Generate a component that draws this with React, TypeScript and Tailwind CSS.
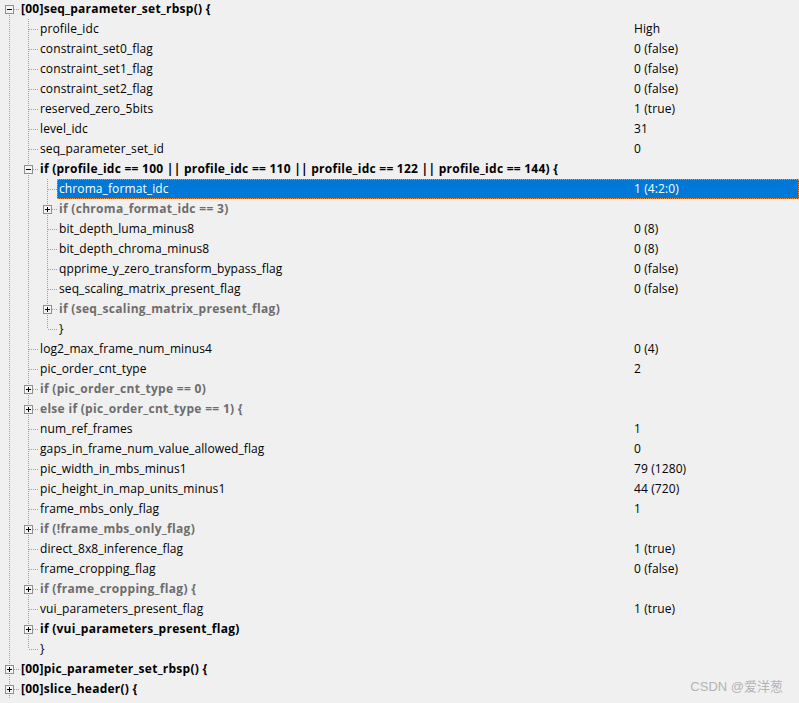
type Row = {
  level: number;
  label: string;
  value?: string;
  kind?: "leaf" | "open" | "closed";
  tone?: "bold" | "gray";
  last?: boolean;
  selected?: boolean;
  first?: boolean;
};

const rows: Row[] = [
  { level: 0, label: "[00]seq_parameter_set_rbsp() {", kind: "open", tone: "bold", first: true },
  { level: 1, label: "profile_idc", value: "High" },
  { level: 1, label: "constraint_set0_flag", value: "0 (false)" },
  { level: 1, label: "constraint_set1_flag", value: "0 (false)" },
  { level: 1, label: "constraint_set2_flag", value: "0 (false)" },
  { level: 1, label: "reserved_zero_5bits", value: "1 (true)" },
  { level: 1, label: "level_idc", value: "31" },
  { level: 1, label: "seq_parameter_set_id", value: "0" },
  {
    level: 1,
    label: "if (profile_idc == 100 || profile_idc == 110 || profile_idc == 122 || profile_idc == 144) {",
    kind: "open",
    tone: "bold",
  },
  { level: 2, label: "chroma_format_idc", value: "1 (4:2:0)", selected: true },
  { level: 2, label: "if (chroma_format_idc == 3)", kind: "closed", tone: "gray" },
  { level: 2, label: "bit_depth_luma_minus8", value: "0 (8)" },
  { level: 2, label: "bit_depth_chroma_minus8", value: "0 (8)" },
  { level: 2, label: "qpprime_y_zero_transform_bypass_flag", value: "0 (false)" },
  { level: 2, label: "seq_scaling_matrix_present_flag", value: "0 (false)" },
  { level: 2, label: "if (seq_scaling_matrix_present_flag)", kind: "closed", tone: "gray" },
  { level: 2, label: "}", last: true },
  { level: 1, label: "log2_max_frame_num_minus4", value: "0 (4)" },
  { level: 1, label: "pic_order_cnt_type", value: "2" },
  { level: 1, label: "if (pic_order_cnt_type == 0)", kind: "closed", tone: "gray" },
  { level: 1, label: "else if (pic_order_cnt_type == 1) {", kind: "closed", tone: "gray" },
  { level: 1, label: "num_ref_frames", value: "1" },
  { level: 1, label: "gaps_in_frame_num_value_allowed_flag", value: "0" },
  { level: 1, label: "pic_width_in_mbs_minus1", value: "79 (1280)" },
  { level: 1, label: "pic_height_in_map_units_minus1", value: "44 (720)" },
  { level: 1, label: "frame_mbs_only_flag", value: "1" },
  { level: 1, label: "if (!frame_mbs_only_flag)", kind: "closed", tone: "gray" },
  { level: 1, label: "direct_8x8_inference_flag", value: "1 (true)" },
  { level: 1, label: "frame_cropping_flag", value: "0 (false)" },
  { level: 1, label: "if (frame_cropping_flag) {", kind: "closed", tone: "gray" },
  { level: 1, label: "vui_parameters_present_flag", value: "1 (true)" },
  { level: 1, label: "if (vui_parameters_present_flag)", kind: "closed", tone: "bold" },
  { level: 1, label: "}", last: true },
  { level: 0, label: "[00]pic_parameter_set_rbsp() {", kind: "closed", tone: "bold" },
  { level: 0, label: "[00]slice_header() {", kind: "closed", tone: "bold" },
];

const DOT = "#a0a0a0";

function Guide() {
  return (
    <svg width="19" height="20" className="shrink-0 block">
      <line x1="9.5" y1="0" x2="9.5" y2="20" stroke={DOT} strokeDasharray="1 1" />
    </svg>
  );
}

function Connector({ row }: { row: Row }) {
  const hasBox = row.kind === "open" || row.kind === "closed";
  return (
    <svg width="19" height="20" className="shrink-0 block">
      {!row.first && (
        <line x1="9.5" y1="0" x2="9.5" y2="10" stroke={DOT} strokeDasharray="1 1" />
      )}
      {!row.last && (
        <line x1="9.5" y1="10" x2="9.5" y2="20" stroke={DOT} strokeDasharray="1 1" />
      )}
      <line
        x1={hasBox ? 14 : 10}
        y1="10.5"
        x2="19"
        y2="10.5"
        stroke={DOT}
        strokeDasharray="1 1"
      />
      {hasBox && (
        <g>
          <rect x="5.5" y="6.5" width="8" height="8" fill="#f4f4f4" stroke="#8f8f8f" />
          <line x1="7" y1="10.5" x2="12" y2="10.5" stroke="#000" />
          {row.kind === "closed" && (
            <line x1="9.5" y1="8" x2="9.5" y2="13" stroke="#000" />
          )}
        </g>
      )}
    </svg>
  );
}

function TreeRow({ row }: { row: Row }) {
  const tone =
    row.selected
      ? "text-white tracking-[0.1px]"
      : row.tone === "bold"
        ? "font-bold text-black tracking-[0.25px]"
        : row.tone === "gray"
          ? "font-bold text-[#6d6d6d] tracking-[0.3px]"
          : "text-black tracking-[0.1px]";
  return (
    <div className="flex h-[20px] items-stretch">
      {Array.from({ length: row.level }).map((_, i) => (
        <Guide key={i} />
      ))}
      <Connector row={row} />
      <div
        className={
          row.selected
            ? "flex flex-1 min-w-0 items-center bg-[#0078d7] outline-1 outline-dotted -outline-offset-1 outline-[#ff8a2a]"
            : "flex flex-1 min-w-0 items-center"
        }
      >
        <span className={`flex-1 min-w-0 pl-[2px] whitespace-nowrap ${tone}`}>{row.label}</span>
        <span
          className={`w-[165px] shrink-0 whitespace-nowrap tracking-[0.1px] ${row.selected ? "text-white" : "text-black"}`}
        >
          {row.value}
        </span>
      </div>
    </div>
  );
}

export default function App() {
  return (
    <div
      className="relative w-[799px] h-[703px] overflow-hidden bg-[#f0f0f0] text-[12px] leading-[20px]"
      style={{ fontFamily: '"Open Sans", "Noto Sans", sans-serif' }}
    >
      <div className="-mt-px flex flex-col">
        {rows.map((row, i) => (
          <TreeRow key={i} row={row} />
        ))}
      </div>
      <div
        className="absolute right-[16px] bottom-[6px] text-[13px] text-[#b4b4b4]"
        style={{ fontFamily: '"Liberation Sans", "Noto Sans CJK SC", sans-serif' }}
      >
        CSDN @爱洋葱
      </div>
    </div>
  );
}
